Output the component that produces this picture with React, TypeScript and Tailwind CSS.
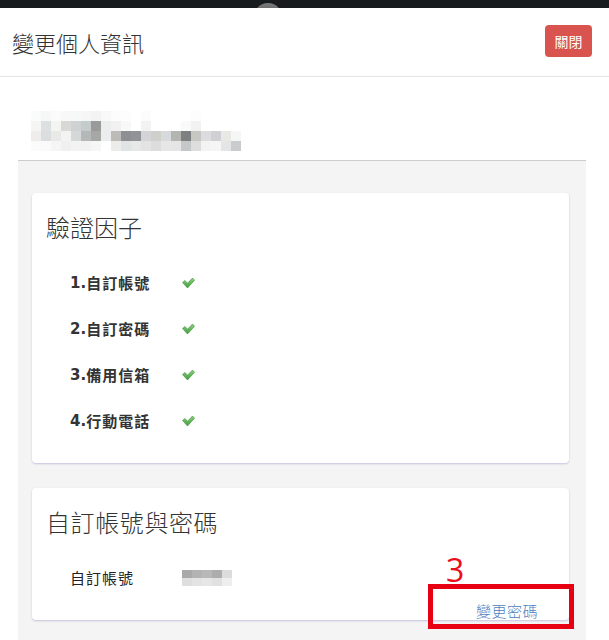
import React from "react";

const cjk = { fontFamily: '"Noto Sans CJK TC", "Noto Sans", sans-serif' };
const digits = { fontFamily: '"DejaVu Sans", "Noto Sans CJK TC", sans-serif' };

const mosaicRows: string[][] = [
  ["#fbfbfb", "#f6f7f7", "#fbfbfb", "#f8f8f8", "#f7f8f8", "#f6f6f6", "#f3f3f3", "#f8f8f8", "#fcfcfc", "#fdfdfd", "#ffffff", "#fcfcfc", "#ffffff", "#ffffff", "#ffffff", "#ffffff", "#fdfdfd", "#ffffff", "#ffffff", "#ffffff", "#ffffff"],
  ["#f5f5f3", "#dde0e0", "#f4f4f2", "#d8d8d6", "#cfd2d2", "#c5cacb", "#9a9a9a", "#eceeee", "#f1f1f1", "#f7f8f8", "#ffffff", "#f2f2f2", "#ffffff", "#ffffff", "#ffffff", "#fafafa", "#f2f2f2", "#ffffff", "#ffffff", "#ffffff", "#ffffff"],
  ["#eeedeb", "#dbdedf", "#e9e9e7", "#f3f3f3", "#d4d8d9", "#b4b8b9", "#a7a7a5", "#ecedee", "#bdbbb7", "#8e8f93", "#929397", "#d3d4d8", "#cfcfcb", "#d6dadd", "#b4b4b0", "#7e7f81", "#c6c6c2", "#dcdcdf", "#d0cfd3", "#e8e8e5", "#f5f7f7"],
  ["#fbfbfb", "#fafafa", "#f5f5f5", "#f0f0f0", "#f3f3f3", "#f2f2f2", "#f6f6f6", "#ffffff", "#ececea", "#e0e4e4", "#e8e8e8", "#e3e3e3", "#dcdcdc", "#e6e6e6", "#e5e5e5", "#c4c8c8", "#dddddd", "#f3f3f3", "#f5f5f5", "#e5e5e5", "#c9cbcc"],
];

const accountRows: string[][] = [
  ["#a9a9a9", "#b3b3b3", "#b8b8b8", "#adadad", "#dcdcdc"],
  ["#dedede", "#e3e3e3", "#e6e6e6", "#e1e1e1", "#eeeeee"],
];

function Mosaic({ rows, w, h }: { rows: string[][]; w: string; h: string }) {
  return (
    <div className="flex flex-col">
      {rows.map((r, i) => (
        <div key={i} className="flex">
          {r.map((c, j) => (
            <div key={j} className={`${w} ${h}`} style={{ backgroundColor: c }} />
          ))}
        </div>
      ))}
    </div>
  );
}

function Check() {
  return (
    <svg width="13" height="12" viewBox="0 0 13 12">
      <defs>
        <linearGradient id="g" x1="0" y1="0" x2="0" y2="1">
          <stop offset="0" stopColor="#8fd07f" />
          <stop offset="1" stopColor="#3f9e3c" />
        </linearGradient>
      </defs>
      <path d="M0.5 5.5 L3 3.5 L5.5 6.2 L10.5 1 L12.6 3.2 L5.5 11 Z" fill="url(#g)" stroke="#3c8f39" strokeWidth="0.6" strokeLinejoin="round" />
    </svg>
  );
}

const items = ["自訂帳號", "自訂密碼", "備用信箱", "行動電話"];

export default function App() {
  return (
    <div className="w-[609px] h-[640px] overflow-hidden bg-white flex flex-col" style={cjk}>
      <div className="relative h-[8px] shrink-0 bg-[#181b1e] overflow-hidden">
        <div className="absolute left-[254px] top-[3px] w-[28px] h-[28px] rounded-full bg-gradient-to-b from-[#7a7a7a] to-[#3a3a3a]" />
      </div>
      <div className="h-[69px] shrink-0 flex items-center justify-between pl-[12px] pr-[17px] border-b border-[#e5e5e5]">
        <div className="text-[22px] leading-[30px] text-[#333] font-light">變更個人資訊</div>
        <button className="w-[47px] h-[32px] rounded-[4px] bg-[#d9534f] text-white text-[14px] leading-[32px] mt-[-3px]">關閉</button>
      </div>
      <div className="flex-1 flex flex-col pl-[18px] pr-[23px]">
        <div className="h-[83px] shrink-0 pt-[34px] pl-[13px]">
          <Mosaic rows={mosaicRows} w="w-[10px]" h="h-[10px]" />
        </div>
        <div className="flex-1 border-t border-[#cccccc] bg-[#f4f4f4] pl-[14px] pr-[17px] pt-[32px]">
          <div className="bg-white rounded-[4px] shadow-[0_1px_2px_rgba(90,80,170,0.3)] pl-[14px] pt-[19px] pb-[19px]">
            <div className="text-[24px] leading-[30px] text-[#333] font-light">驗證因子</div>
            <div className="mt-[18px] pl-[24px]">
              {items.map((t, i) => (
                <div key={t} className="h-[46px] flex items-center">
                  <div className="w-[112px] text-[15px] text-[#333] tracking-[1px] flex items-center">
                    <span className="font-bold tracking-normal" style={digits}>{i + 1}.</span>
                    <span className="font-semibold">{t}</span>
                  </div>
                  <Check />
                </div>
              ))}
            </div>
          </div>
          <div className="relative mt-[25px] bg-white rounded-[4px] shadow-[0_1px_2px_rgba(90,80,170,0.3)] pl-[14px] pt-[19px]">
            <div className="text-[24px] leading-[30px] text-[#333] font-light tracking-[0.6px]">自訂帳號與密碼</div>
            <div className="mt-[18px] pl-[24px] h-[46px] flex items-center">
              <div className="w-[112px] text-[15px] text-[#222] tracking-[1px]">自訂帳號</div>
              <Mosaic rows={accountRows} w="w-[10px]" h="h-[8px]" />
            </div>
            <div className="h-[19px] text-right pr-[31px] text-[15px] leading-[19px] text-[#4d7fc0] tracking-[0.5px] font-light">變更密碼</div>
            <div className="absolute left-[414px] top-[66px] text-[#e8101a] text-[32px] leading-[32px]" style={{ fontFamily: '"Open Sans", sans-serif' }}>3</div>
            <div className="absolute left-[396px] top-[96px] w-[146px] h-[45px] border-[5px] border-[#e60012]" />
          </div>
        </div>
      </div>
    </div>
  );
}
